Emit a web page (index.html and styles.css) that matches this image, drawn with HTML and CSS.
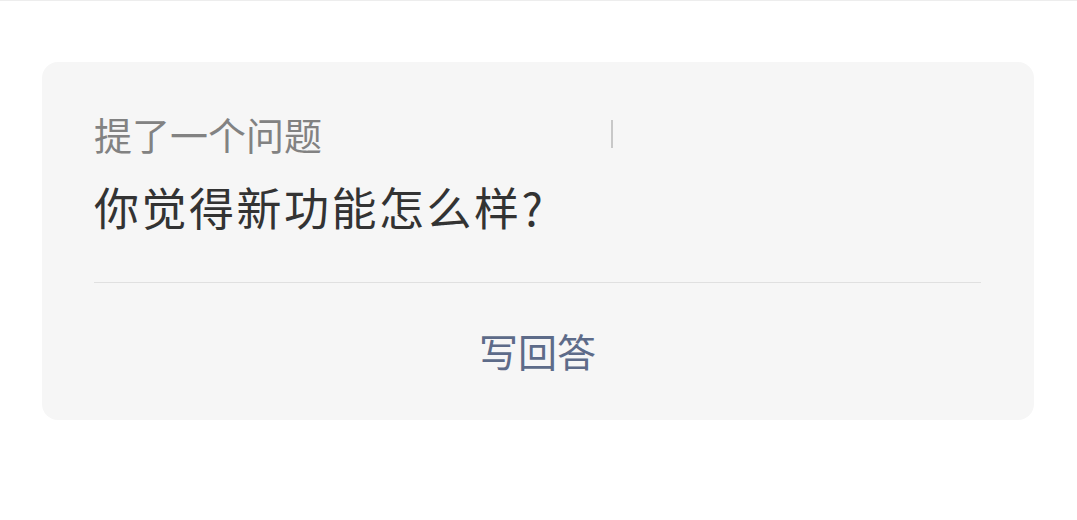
FILE: index.html
```html
<!DOCTYPE html>
<html lang="zh-CN">
<head>
    <meta charset="UTF-8">
    <meta name="viewport" content="width=device-width, initial-scale=1.0">
    <title>提问卡片</title>
    <link rel="stylesheet" href="styles.css">
</head>
<body>
    <div class="page">
        <div class="question-card">
            <div class="card-head">
                <span class="label">提了一个问题</span>
                <span class="caret"></span>
            </div>
            <div class="question">你觉得新功能怎么样?</div>
            <div class="divider"></div>
            <div class="actions">
                <button class="answer-btn">写回答</button>
            </div>
        </div>
    </div>
</body>
</html>
```

FILE: styles.css
```css
body {
    margin: 0;
    font-family: "Noto Sans CJK SC", "Noto Sans", sans-serif;
    background-color: #fff;
    color: #333;
}
.page {
    height: 520px;
    box-sizing: border-box;
    border-top: 1px solid #ededed;
    padding: 61px 43px 0 42px;
}
.question-card {
    background-color: #f6f6f6;
    border-radius: 16px;
    padding: 44px 53px 42px 52px;
}
.card-head {
    display: flex;
    align-items: center;
    height: 56px;
}
.label {
    font-size: 38px;
    line-height: 56px;
    color: #828282;
}
.caret {
    width: 2px;
    height: 28px;
    margin-left: 289px;
    background-color: #c8c8c8;
}
.question {
    margin-top: 15px;
    font-size: 45px;
    line-height: 60px;
    letter-spacing: 2.5px;
    color: #333;
}
.divider {
    margin-top: 45px;
    height: 1px;
    background-color: #e0e0e0;
}
.actions {
    display: flex;
    justify-content: center;
    margin-top: 39px;
}
.answer-btn {
    border: none;
    background: none;
    padding: 0;
    font-family: inherit;
    font-size: 39px;
    line-height: 56px;
    color: #5d6b89;
    cursor: pointer;
}
```
